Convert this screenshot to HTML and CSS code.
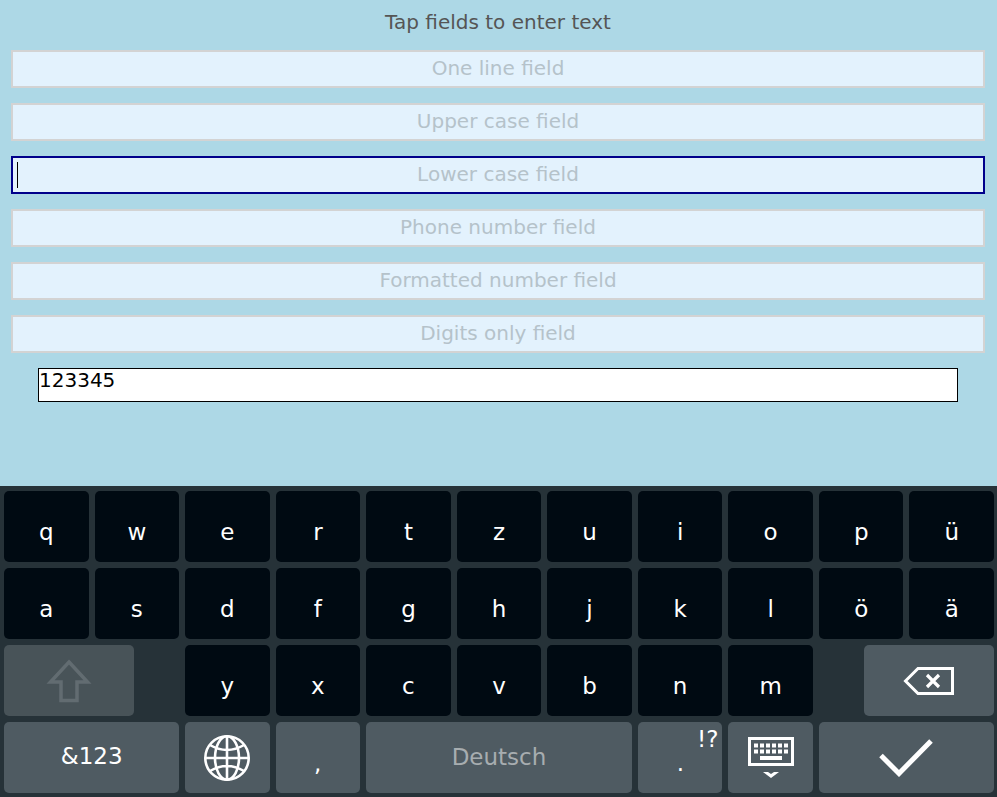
FILE: index.html
```html
<!DOCTYPE html>
<html lang="en">
<head>
  <meta charset="UTF-8" />
  <meta name="viewport" content="width=device-width, initial-scale=1" />
  <title>Virtual Keyboard</title>
  <link rel="stylesheet" href="styles.css">
</head>
<body>

  <form class="fields">
    <h1>Tap fields to enter text</h1>
    <div class="field"><input type="text" placeholder="One line field" aria-label="One line field" /></div>
    <div class="field"><input type="text" placeholder="Upper case field" aria-label="Upper case field" /></div>
    <div class="field active"><input type="text" placeholder="Lower case field" aria-label="Lower case field" /></div>
    <div class="field"><input type="tel" placeholder="Phone number field" aria-label="Phone number field" /></div>
    <div class="field"><input type="text" placeholder="Formatted number field" aria-label="Formatted number field" /></div>
    <div class="field"><input type="text" inputmode="numeric" placeholder="Digits only field" aria-label="Digits only field" /></div>
    <textarea class="plain" rows="1" aria-label="Text">123345</textarea>
  </form>

  <div class="keyboard">
    <div class="row">
      <button class="key">q</button>
      <button class="key">w</button>
      <button class="key">e</button>
      <button class="key">r</button>
      <button class="key">t</button>
      <button class="key">z</button>
      <button class="key">u</button>
      <button class="key">i</button>
      <button class="key">o</button>
      <button class="key">p</button>
      <button class="key">ü</button>
    </div>

    <div class="row">
      <button class="key">a</button>
      <button class="key">s</button>
      <button class="key">d</button>
      <button class="key">f</button>
      <button class="key">g</button>
      <button class="key">h</button>
      <button class="key">j</button>
      <button class="key">k</button>
      <button class="key">l</button>
      <button class="key">ö</button>
      <button class="key">ä</button>
    </div>

    <div class="row">
      <button class="key special shift" aria-label="Shift" disabled>
        <svg width="46" height="44" viewBox="0 0 46 44">
          <path d="M23 3 L41.500 23 H31 V41.500 H15 V23 H4.500 Z" fill="none" stroke="#626c71" stroke-width="3.500" />
        </svg>
      </button>
      <button class="key first">y</button>
      <button class="key">x</button>
      <button class="key">c</button>
      <button class="key">v</button>
      <button class="key">b</button>
      <button class="key">n</button>
      <button class="key">m</button>
      <button class="key special backspace" aria-label="Backspace">
        <svg width="52" height="28" viewBox="0 0 52 28">
          <path d="M15 1.5 H49.5 V26.5 H15 L2.5 14 Z" fill="none" stroke="#fff" stroke-width="3" />
          <path d="M24 8 L36 20 M36 8 L24 20" fill="none" stroke="#fff" stroke-width="3.2" />
        </svg>
      </button>
    </div>

    <div class="row bottom">
      <button class="key special label">&amp;123</button>
      <button class="key special" aria-label="Change language">
        <svg width="46" height="46" viewBox="0 0 46 46" fill="none" stroke="#fff" stroke-width="2.6">
          <circle cx="23" cy="23" r="21.7" />
          <ellipse cx="23" cy="23" rx="12" ry="21.7" />
          <path d="M23 1 V45 M1 23 H45 M6 10 Q23 20 40 10 M6 36 Q23 26 40 36" />
        </svg>
      </button>
      <button class="key special letter">,</button>
      <button class="key special label space">Deutsch</button>
      <button class="key special letter">.<span class="alt">!?</span></button>
      <button class="key special" aria-label="Hide keyboard">
        <svg width="46" height="42" viewBox="0 0 46 42">
          <rect x="1.5" y="1.5" width="43" height="26" fill="none" stroke="#fff" stroke-width="3" />
          <path d="M6 8.500 H40 M6 14.5 H40" stroke="#fff" stroke-width="4" stroke-dasharray="4 2" />
          <path d="M12 21 H34" stroke="#fff" stroke-width="4" />
          <path d="M15 35 H20 L23 37 L26 35 H31 L23 41 Z" fill="#fff" />
        </svg>
      </button>
      <button class="key special" aria-label="Enter">
        <svg width="54" height="38" viewBox="0 0 54 38">
          <path d="M2 16.500 L20 34.500 L52 2" fill="none" stroke="#fff" stroke-width="5" />
        </svg>
      </button>
    </div>
  </div>

</body>
</html>
```
FILE: styles.css
```css
* {
  box-sizing: border-box;
}

body {
  font-family: "DejaVu Sans", sans-serif;
  background: #add8e6;
  min-height: 100vh;
  margin: 0;
  display: flex;
  flex-direction: column;
}

/* FIELDS */
.fields {
  flex: 1;
  display: flex;
  flex-direction: column;
  gap: 15px;
  padding: 9px 12px 15px 11px;
}

h1 {
  margin: 0;
  font-size: 20px;
  font-weight: normal;
  line-height: 26px;
  text-align: center;
  color: #555;
}

.field {
  position: relative;
}

.field input {
  display: block;
  width: 100%;
  height: 38px;
  padding: 0 4px 2px;
  border: 2px solid #d3d3d3;
  border-radius: 0;
  outline: none;
  background: #e3f2fd;
  font-family: inherit;
  font-size: 20px;
  text-align: center;
}

.field input::placeholder {
  color: #b5c2ca;
  opacity: 1;
}

.field.active input {
  border-color: #00008b;
  caret-color: transparent;
}

/* text cursor */
.field.active::before {
  content: "";
  position: absolute;
  left: 6px;
  top: 6px;
  bottom: 6px;
  width: 1px;
  background: #000;
}

.plain {
  height: 34px;
  margin: 0 27px;
  padding: 0;
  border: 1px solid #000;
  border-radius: 0;
  resize: none;
  overflow: hidden;
  background: #fff;
  color: #000;
  font-family: inherit;
  font-size: 20px;
  line-height: 22px;
}

/* KEYBOARD */
.keyboard {
  display: flex;
  flex-direction: column;
  gap: 6px;
  padding: 5px 3px 4px 4px;
  background: #263238;
}

.row {
  display: grid;
  grid-template-columns: repeat(22, 1fr);
  gap: 6px;
}

.row.bottom {
  grid-template-columns: 25fr 12fr 12fr 38fr 12fr 12fr 25fr;
}

.key {
  position: relative;
  grid-column: span 2;
  display: flex;
  justify-content: center;
  align-items: center;
  min-width: 0;
  height: 71px;
  padding: 10px 0 0;
  border: none;
  border-radius: 5px;
  background: #000a12;
  color: #fff;
  font-family: inherit;
  font-size: 23px;
  cursor: pointer;
}

.key.special {
  padding: 0;
  background: #4f5b62;
}

.bottom .key {
  grid-column: auto;
}

.key.special.shift {
  grid-column: span 3;
  background: #485358;
}

.key.first {
  grid-column: 5 / span 2;
}

.key.backspace {
  grid-column: 20 / span 3;
}

.key.label {
  padding-bottom: 4px;
}

.key.letter {
  padding-top: 10px;
}

.key.space {
  padding-bottom: 2px;
  color: #a7adb0;
}

.alt {
  position: absolute;
  top: 4px;
  right: 4px;
}

.key svg {
  display: block;
}
```
